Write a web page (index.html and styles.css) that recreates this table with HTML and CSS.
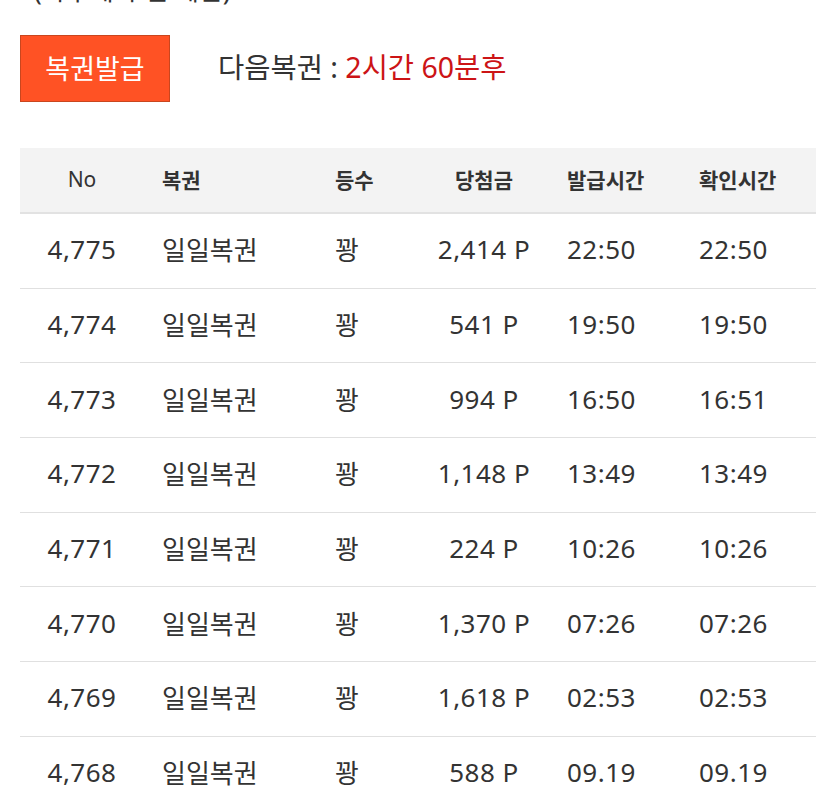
FILE: index.html
```html
<!DOCTYPE html>
<html lang="ko">
<head>
<meta charset="utf-8">
<title>복권</title>
<link rel="stylesheet" href="styles.css">
</head>
<body>
<div class="page">
  <p class="note">(하루에 두번 제한)</p>
  <div class="issue">
    <button class="issue-btn" type="button">복권발급</button>
    <div class="next">다음복권 : <span class="next-time">2시간 60분후</span></div>
  </div>
  <table class="list">
    <colgroup>
      <col class="c-no"><col class="c-name"><col class="c-rank"><col class="c-prize"><col class="c-issued"><col class="c-checked">
    </colgroup>
    <thead>
      <tr><th class="a-center th-no">No</th><th class="a-left pad-name">복권</th><th class="a-left">등수</th><th class="a-center">당첨금</th><th class="a-left pad-issued">발급시간</th><th class="a-left pad-checked">확인시간</th></tr>
    </thead>
    <tbody>
      <tr><td class="a-center num">4,775</td><td class="a-left pad-name">일일복권</td><td class="a-left">꽝</td><td class="a-center num">2,414 P</td><td class="a-left pad-issued num">22:50</td><td class="a-left pad-checked num">22:50</td></tr>
      <tr><td class="a-center num">4,774</td><td class="a-left pad-name">일일복권</td><td class="a-left">꽝</td><td class="a-center num">541 P</td><td class="a-left pad-issued num">19:50</td><td class="a-left pad-checked num">19:50</td></tr>
      <tr><td class="a-center num">4,773</td><td class="a-left pad-name">일일복권</td><td class="a-left">꽝</td><td class="a-center num">994 P</td><td class="a-left pad-issued num">16:50</td><td class="a-left pad-checked num">16:51</td></tr>
      <tr><td class="a-center num">4,772</td><td class="a-left pad-name">일일복권</td><td class="a-left">꽝</td><td class="a-center num">1,148 P</td><td class="a-left pad-issued num">13:49</td><td class="a-left pad-checked num">13:49</td></tr>
      <tr><td class="a-center num">4,771</td><td class="a-left pad-name">일일복권</td><td class="a-left">꽝</td><td class="a-center num">224 P</td><td class="a-left pad-issued num">10:26</td><td class="a-left pad-checked num">10:26</td></tr>
      <tr><td class="a-center num">4,770</td><td class="a-left pad-name">일일복권</td><td class="a-left">꽝</td><td class="a-center num">1,370 P</td><td class="a-left pad-issued num">07:26</td><td class="a-left pad-checked num">07:26</td></tr>
      <tr><td class="a-center num">4,769</td><td class="a-left pad-name">일일복권</td><td class="a-left">꽝</td><td class="a-center num">1,618 P</td><td class="a-left pad-issued num">02:53</td><td class="a-left pad-checked num">02:53</td></tr>
      <tr><td class="a-center num">4,768</td><td class="a-left pad-name">일일복권</td><td class="a-left">꽝</td><td class="a-center num">588 P</td><td class="a-left pad-issued num">09.19</td><td class="a-left pad-checked num">09.19</td></tr>
    </tbody>
  </table>
</div>
</body>
</html>
```
FILE: styles.css
```css
html, body {
  margin: 0;
  padding: 0;
  background: #ffffff;
  overflow: hidden;
}
body {
  font-family: "Noto Sans", "Noto Sans CJK KR", sans-serif;
  color: #333333;
}
.page {
  padding: 0 19px 0 20px;
}
.note {
  margin: -26px 0 0 14px;
  font-size: 26px;
  line-height: 32px;
  height: 32px;
  color: #333;
}
.issue {
  display: flex;
  align-items: center;
  gap: 48px;
  margin-top: 29px;
}
.issue-btn {
  width: 150px;
  height: 67px;
  background: #ff5224;
  border: 1px solid #c9461e;
  color: #ffffff;
  font-family: inherit;
  font-size: 27px;
  padding: 0 0 2px;
  margin: 0;
}
.next {
  font-size: 28.5px;
  color: #333333;
  padding-bottom: 7px;
}
.next-time {
  color: #cc1416;
}
.list {
  width: 796px;
  margin-top: 46px;
  border-collapse: collapse;
  table-layout: fixed;
}
.c-no { width: 124px; }
.c-name { width: 191px; }
.c-rank { width: 85px; }
.c-prize { width: 128px; }
.c-issued { width: 142px; }
.c-checked { width: 126px; }
.list th {
  background: #f3f3f3;
  height: 61px;
  font-size: 21px;
  font-weight: 700;
  color: #333;
  padding: 0 0 3px;
  border-bottom: 2px solid #e2e2e2;
}
.list th.th-no {
  font-weight: 400;
}
.list td {
  height: 70.7px;
  font-size: 26px;
  padding: 0 0 3px;
  color: #333;
  border-bottom: 1px solid #e0e0e0;
}
.list td.num {
  letter-spacing: 0.5px;
}
.a-center { text-align: center; }
.a-left { text-align: left; }
.pad-name { padding-left: 18px !important; }
.pad-issued { padding-left: 19px !important; }
.pad-checked { padding-left: 9px !important; }
```
